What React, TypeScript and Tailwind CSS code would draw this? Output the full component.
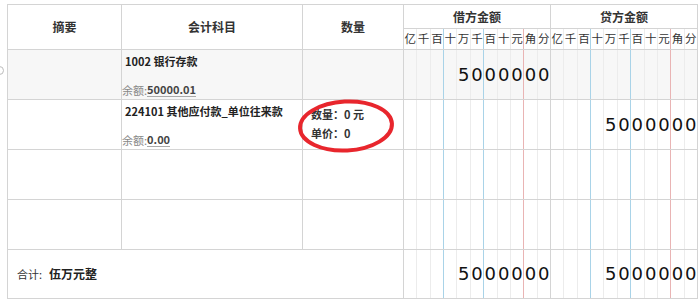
import React from "react";

const lineColor = (i: number) => {
  if (i === 2 || i === 5) return "border-[#a9d3e8]";
  if (i === 8) return "border-[#e9b4b4]";
  return "border-[#ececec]";
};

const units = ["亿", "千", "百", "十", "万", "千", "百", "十", "元", "角", "分"];

function Cols({ digits, header }: { digits?: string; header?: boolean }) {
  const padded = digits ? digits.padStart(11, " ").split("") : Array(11).fill(" ");
  return (
    <div className="flex h-full w-full">
      {units.map((u, i) => (
        <div
          key={i}
          className={
            "flex-1 flex items-center justify-center " +
            (i < 10 ? "border-r " + lineColor(i) : "")
          }
        >
          {header ? (
            <span className="text-[11.5px] text-[#333]">{u}</span>
          ) : (
            <span className="font-['DejaVu_Sans',sans-serif] text-[18px] text-[#111] leading-none">
              {padded[i] === " " ? "" : padded[i]}
            </span>
          )}
        </div>
      ))}
    </div>
  );
}

function Row({
  bg,
  title,
  balance,
  qty,
  debit,
  credit,
}: {
  bg?: string;
  title?: string;
  balance?: string;
  qty?: boolean;
  debit?: string;
  credit?: string;
}) {
  return (
    <div className={"flex h-[50px] border-b border-[#d4d4d4] " + (bg || "")}>
      <div className="w-[114px] border-r border-[#d4d4d4]" />
      <div className="w-[181px] border-r border-[#d4d4d4] flex flex-col justify-between pb-[2px]">
        {title ? (
          <>
            <div className="pl-[3px] pt-[4px] leading-[14px] text-[11px] font-bold text-[#222]">{title}</div>
            <div className="leading-[14px] text-[11px] flex items-end">
              <span className="text-[#888]">余额:</span>
              <span className="inline-block font-bold text-[#444] leading-[13px] border-b border-[#aaa]">{balance}</span>
            </div>
          </>
        ) : null}
      </div>
      <div className="w-[101px] border-r border-[#d4d4d4] pl-[8px] pt-[5px]">
        {qty ? (
          <div className="text-[11px] font-bold text-[#333] leading-[19px]">
            <div>数量：0 元</div>
            <div>单价：0</div>
          </div>
        ) : null}
      </div>
      <div className="w-[147px] border-r border-[#d4d4d4]">
        <Cols digits={debit} />
      </div>
      <div className="w-[147px] border-r border-[#d4d4d4]">
        <Cols digits={credit} />
      </div>
    </div>
  );
}

export default function App() {
  return (
    <div className="relative w-[700px] h-[303px] overflow-hidden bg-white text-[#333] font-['Noto_Sans_CJK_SC','Noto_Sans',sans-serif]">
      <div className="absolute left-[-5px] top-[66px] w-[9px] h-[9px] rounded-full border border-[#bbb]" />
      <div className="ml-[7px] mt-[4px] w-[691px] border-l border-t border-[#d4d4d4]">
        {/* header */}
        <div className="flex h-[45px] border-b border-[#d4d4d4] text-[12px] font-bold text-[#333]">
          <div className="w-[114px] border-r border-[#d4d4d4] flex items-center justify-center">摘要</div>
          <div className="w-[181px] border-r border-[#d4d4d4] flex items-center justify-center">会计科目</div>
          <div className="w-[101px] border-r border-[#d4d4d4] flex items-center justify-center">数量</div>
          <div className="w-[147px] border-r border-[#d4d4d4] flex flex-col">
            <div className="h-[24px] border-b border-[#d4d4d4] flex items-center justify-center">借方金额</div>
            <div className="flex-1 font-normal">
              <Cols header />
            </div>
          </div>
          <div className="w-[147px] border-r border-[#d4d4d4] flex flex-col">
            <div className="h-[24px] border-b border-[#d4d4d4] flex items-center justify-center">贷方金额</div>
            <div className="flex-1 font-normal">
              <Cols header />
            </div>
          </div>
        </div>
        <Row bg="bg-[#f7f7f7]" title="1002 银行存款" balance="50000.01" debit="5000000" />
        <Row title="224101 其他应付款_单位往来款" balance="0.00" qty credit="5000000" />
        <Row />
        <Row />
        {/* total */}
        <div className="flex h-[49px] border-b border-[#d4d4d4]">
          <div className="w-[396px] border-r border-[#d4d4d4] flex items-center pl-[9px]">
            <span className="text-[11px] text-[#333]">合计:</span>
            <span className="ml-[7px] text-[12px] font-bold text-[#222]">伍万元整</span>
          </div>
          <div className="w-[147px] border-r border-[#d4d4d4]">
            <Cols digits="5000000" />
          </div>
          <div className="w-[147px] border-r border-[#d4d4d4]">
            <Cols digits="5000000" />
          </div>
        </div>
      </div>
      <svg
        className="absolute left-[295px] top-[97px]"
        width="102"
        height="58"
        viewBox="0 0 102 58"
      >
        <ellipse
          cx="51"
          cy="29"
          rx="46"
          ry="24.5"
          fill="none"
          stroke="#e8262d"
          strokeWidth="4"
          transform="rotate(-3 51 29)"
        />
      </svg>
    </div>
  );
}
